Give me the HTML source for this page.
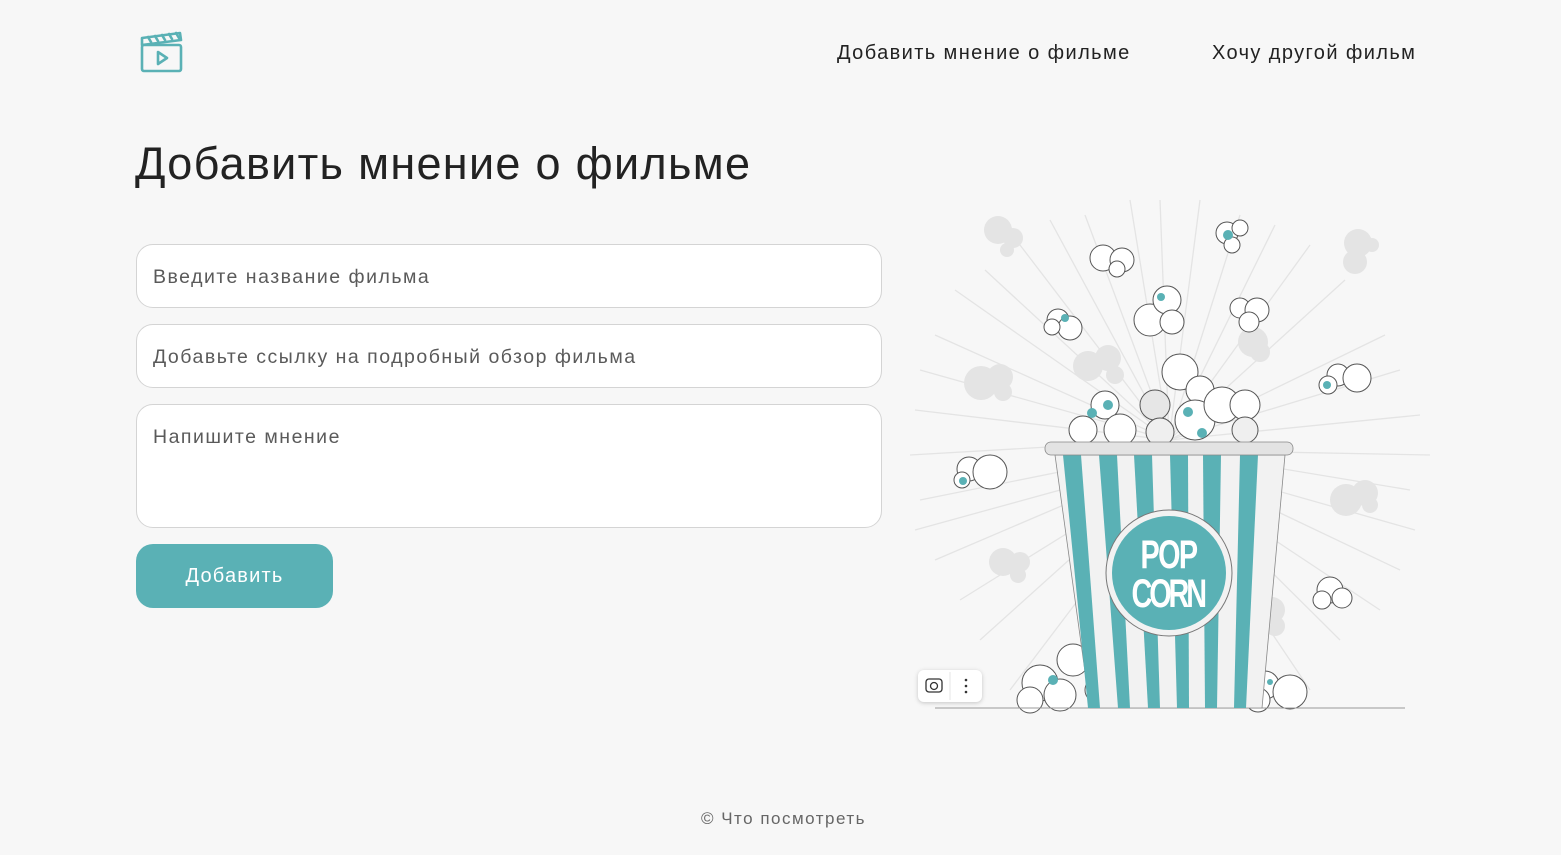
<!DOCTYPE html>
<html><head><meta charset="utf-8"><style>
*{box-sizing:border-box;margin:0;padding:0}
body{width:1561px;height:855px;background:#f7f7f7;font-family:"Liberation Sans",sans-serif;color:#1f1f1f;position:relative;overflow:hidden}
.nav{position:absolute;top:42px;font-size:20px;color:#222;letter-spacing:1.4px}
h1{position:absolute;left:135px;top:138px;font-size:45px;font-weight:500;color:#222;letter-spacing:1.3px}
.inp{position:absolute;left:136px;width:746px;background:#fff;border:1px solid #d4d4d4;border-radius:17px;font-size:19.5px;color:#5a5a5a;padding:21px 16px;letter-spacing:1.5px}
.btn{position:absolute;left:136px;top:544px;width:197px;height:64px;background:#5ab1b5;border-radius:17px;color:#fff;font-size:20px;text-align:center;line-height:64px;letter-spacing:1.2px}
.foot{position:absolute;top:809px;left:0;width:1561px;text-align:center;font-size:17px;color:#666;padding-left:6px;letter-spacing:1.5px}
</style></head><body>
<svg style="position:absolute;left:139px;top:30px" width="45" height="44" viewBox="0 0 45 44" fill="none" stroke="#5ab1b5" stroke-width="2.6" stroke-linejoin="round" stroke-linecap="round">
<rect x="3" y="15" width="39" height="26" rx="2"/>
<path d="M3 15 L3 8 L41 3 L42 10 L3 15"/>
<path d="M9 7 L12 12 M16 6 L19 11 M23 5 L26 10 M30 4 L33 9 M37 3 L40 8"/>
<path d="M19 22 L28 28 L19 34 Z"/>
</svg>
<div class="nav" style="left:837px">Добавить мнение о фильме</div>
<div class="nav" style="left:1212px">Хочу другой фильм</div>
<h1>Добавить мнение о фильме</h1>
<div class="inp" style="top:244px;height:64px">Введите название фильма</div>
<div class="inp" style="top:324px;height:64px">Добавьте ссылку на подробный обзор фильма</div>
<div class="inp" style="top:404px;height:124px">Напишите мнение</div>
<div class="btn">Добавить</div>

<svg style="position:absolute;left:0;top:0" width="1561" height="855">
<g stroke="#e4e4e4" stroke-width="1.3">
<line x1="1169" y1="440" x2="910" y2="455"/><line x1="1169" y1="440" x2="915" y2="410"/><line x1="1169" y1="440" x2="920" y2="370"/><line x1="1169" y1="440" x2="935" y2="335"/><line x1="1169" y1="440" x2="955" y2="290"/><line x1="1169" y1="440" x2="985" y2="270"/><line x1="1169" y1="440" x2="1020" y2="245"/><line x1="1169" y1="440" x2="1050" y2="220"/><line x1="1169" y1="440" x2="1085" y2="215"/><line x1="1169" y1="440" x2="1130" y2="200"/><line x1="1169" y1="440" x2="1160" y2="200"/><line x1="1169" y1="440" x2="1200" y2="200"/><line x1="1169" y1="440" x2="1240" y2="215"/><line x1="1169" y1="440" x2="1275" y2="225"/><line x1="1169" y1="440" x2="1310" y2="245"/><line x1="1169" y1="440" x2="1345" y2="280"/><line x1="1169" y1="440" x2="1385" y2="335"/><line x1="1169" y1="440" x2="1400" y2="370"/><line x1="1169" y1="440" x2="1420" y2="415"/><line x1="1169" y1="450" x2="1430" y2="455"/><line x1="1169" y1="450" x2="1410" y2="490"/><line x1="1169" y1="460" x2="1415" y2="530"/><line x1="1169" y1="460" x2="1400" y2="570"/><line x1="1169" y1="470" x2="1380" y2="610"/><line x1="1169" y1="470" x2="1340" y2="640"/><line x1="1169" y1="480" x2="1310" y2="690"/><line x1="1169" y1="450" x2="920" y2="500"/><line x1="1169" y1="460" x2="915" y2="530"/><line x1="1169" y1="460" x2="935" y2="560"/><line x1="1169" y1="470" x2="960" y2="600"/><line x1="1169" y1="470" x2="980" y2="640"/><line x1="1169" y1="480" x2="1010" y2="690"/>
</g>
<g fill="#e4e4e4">
<circle cx="998" cy="230" r="14"/><circle cx="1013" cy="238" r="10"/><circle cx="1007" cy="250" r="7"/>
<circle cx="1358" cy="243" r="14"/><circle cx="1355" cy="262" r="12"/><circle cx="1372" cy="245" r="7"/>
<circle cx="1088" cy="366" r="15"/><circle cx="1108" cy="358" r="13"/><circle cx="1115" cy="375" r="9"/>
<circle cx="981" cy="383" r="17"/><circle cx="1000" cy="377" r="13"/><circle cx="1003" cy="392" r="9"/>
<circle cx="1253" cy="342" r="15"/><circle cx="1260" cy="352" r="10"/>
<circle cx="1346" cy="500" r="16"/><circle cx="1365" cy="493" r="13"/><circle cx="1370" cy="505" r="8"/>
<circle cx="1003" cy="562" r="14"/><circle cx="1020" cy="562" r="10"/><circle cx="1018" cy="575" r="8"/>
<circle cx="1272" cy="610" r="13"/><circle cx="1275" cy="626" r="10"/>
</g>
<g fill="#fff" stroke="#555" stroke-width="1">
<circle cx="1103" cy="258" r="13"/><circle cx="1122" cy="260" r="12"/><circle cx="1117" cy="269" r="8"/>
<circle cx="1227" cy="233" r="11"/><circle cx="1240" cy="228" r="8"/><circle cx="1232" cy="245" r="8"/>
<circle cx="1150" cy="320" r="16"/><circle cx="1167" cy="300" r="14"/><circle cx="1172" cy="322" r="12"/>
<circle cx="1058" cy="320" r="11"/><circle cx="1070" cy="328" r="12"/><circle cx="1052" cy="327" r="8"/>
<circle cx="1240" cy="308" r="10"/><circle cx="1257" cy="310" r="12"/><circle cx="1249" cy="322" r="10"/>
<circle cx="1338" cy="375" r="11"/><circle cx="1357" cy="378" r="14"/><circle cx="1328" cy="385" r="9"/>
<circle cx="969" cy="469" r="12"/><circle cx="990" cy="472" r="17"/><circle cx="962" cy="480" r="8"/>
<circle cx="1330" cy="590" r="13"/><circle cx="1322" cy="600" r="9"/><circle cx="1342" cy="598" r="10"/>
<circle cx="1180" cy="372" r="18"/><circle cx="1200" cy="390" r="14"/><circle cx="1105" cy="405" r="14"/><circle cx="1083" cy="430" r="14"/><circle cx="1120" cy="430" r="16"/><circle cx="1155" cy="405" r="15" fill="#e6e6e6"/><circle cx="1195" cy="420" r="20"/><circle cx="1222" cy="405" r="18"/><circle cx="1245" cy="405" r="15"/><circle cx="1245" cy="430" r="13" fill="#efefef"/><circle cx="1160" cy="432" r="14" fill="#efefef"/>
<circle cx="1040" cy="683" r="18"/><circle cx="1073" cy="660" r="16"/><circle cx="1060" cy="695" r="16"/><circle cx="1030" cy="700" r="13"/><circle cx="1097" cy="690" r="12"/>
<circle cx="1265" cy="685" r="14"/><circle cx="1290" cy="692" r="17"/><circle cx="1258" cy="700" r="12"/>
</g>
<g fill="#5ab1b5">
<circle cx="1228" cy="235" r="5"/><circle cx="1161" cy="297" r="4"/><circle cx="1065" cy="318" r="4"/><circle cx="1327" cy="385" r="4"/><circle cx="963" cy="481" r="4"/><circle cx="1108" cy="405" r="5"/><circle cx="1092" cy="413" r="5"/><circle cx="1188" cy="412" r="5"/><circle cx="1202" cy="433" r="5"/><circle cx="1053" cy="680" r="5"/><circle cx="1255" cy="701" r="5"/><circle cx="1270" cy="682" r="3"/>
</g>
<line x1="935" y1="708" x2="1405" y2="708" stroke="#999" stroke-width="1"/>
<path d="M1055 455 L1285 455 L1262 708 L1090 708 Z" fill="#f2f2f2" stroke="#888" stroke-width="0.8"/>
<g fill="#5ab1b5">
<path d="M1063 455h18l19 253h-12Z"/><path d="M1099 455h18l13 253h-12Z"/><path d="M1134 455h18l8 253h-12Z"/><path d="M1170 455h18l1 253h-12Z"/><path d="M1203 455h18l-4 253h-12Z"/><path d="M1240 455h18l-12 253h-12Z"/>
</g>
<rect x="1045" y="442" width="248" height="13" rx="6" fill="#e3e3e3" stroke="#888" stroke-width="0.8"/>
<circle cx="1169" cy="573" r="63" fill="#f2f2f2" stroke="#777" stroke-width="1"/>
<circle cx="1169" cy="573" r="57" fill="#5ab1b5"/>
<text x="1169" y="568" text-anchor="middle" font-family="Liberation Sans" font-weight="bold" font-size="40" fill="#fff" transform="scale(0.72,1) translate(455,0)" textLength="80">POP</text>
<text x="1169" y="607" text-anchor="middle" font-family="Liberation Sans" font-weight="bold" font-size="40" fill="#fff" transform="scale(0.72,1) translate(455,0)" textLength="105">CORN</text>
<rect x="918" y="670" width="64" height="32" rx="6" fill="#fff" style="filter:drop-shadow(0 1px 2px rgba(0,0,0,.2))"/>
<line x1="950" y1="672" x2="950" y2="700" stroke="#e5e5e5"/>
<rect x="926" y="679" width="16" height="13" rx="3" fill="none" stroke="#333" stroke-width="1.3"/>
<circle cx="934" cy="686" r="3.5" fill="none" stroke="#333" stroke-width="1.3"/>
<circle cx="966" cy="680" r="1.3" fill="#333"/><circle cx="966" cy="686" r="1.3" fill="#333"/><circle cx="966" cy="692" r="1.3" fill="#333"/>
</svg>
<div class="foot">© Что посмотреть</div>
</body></html>
